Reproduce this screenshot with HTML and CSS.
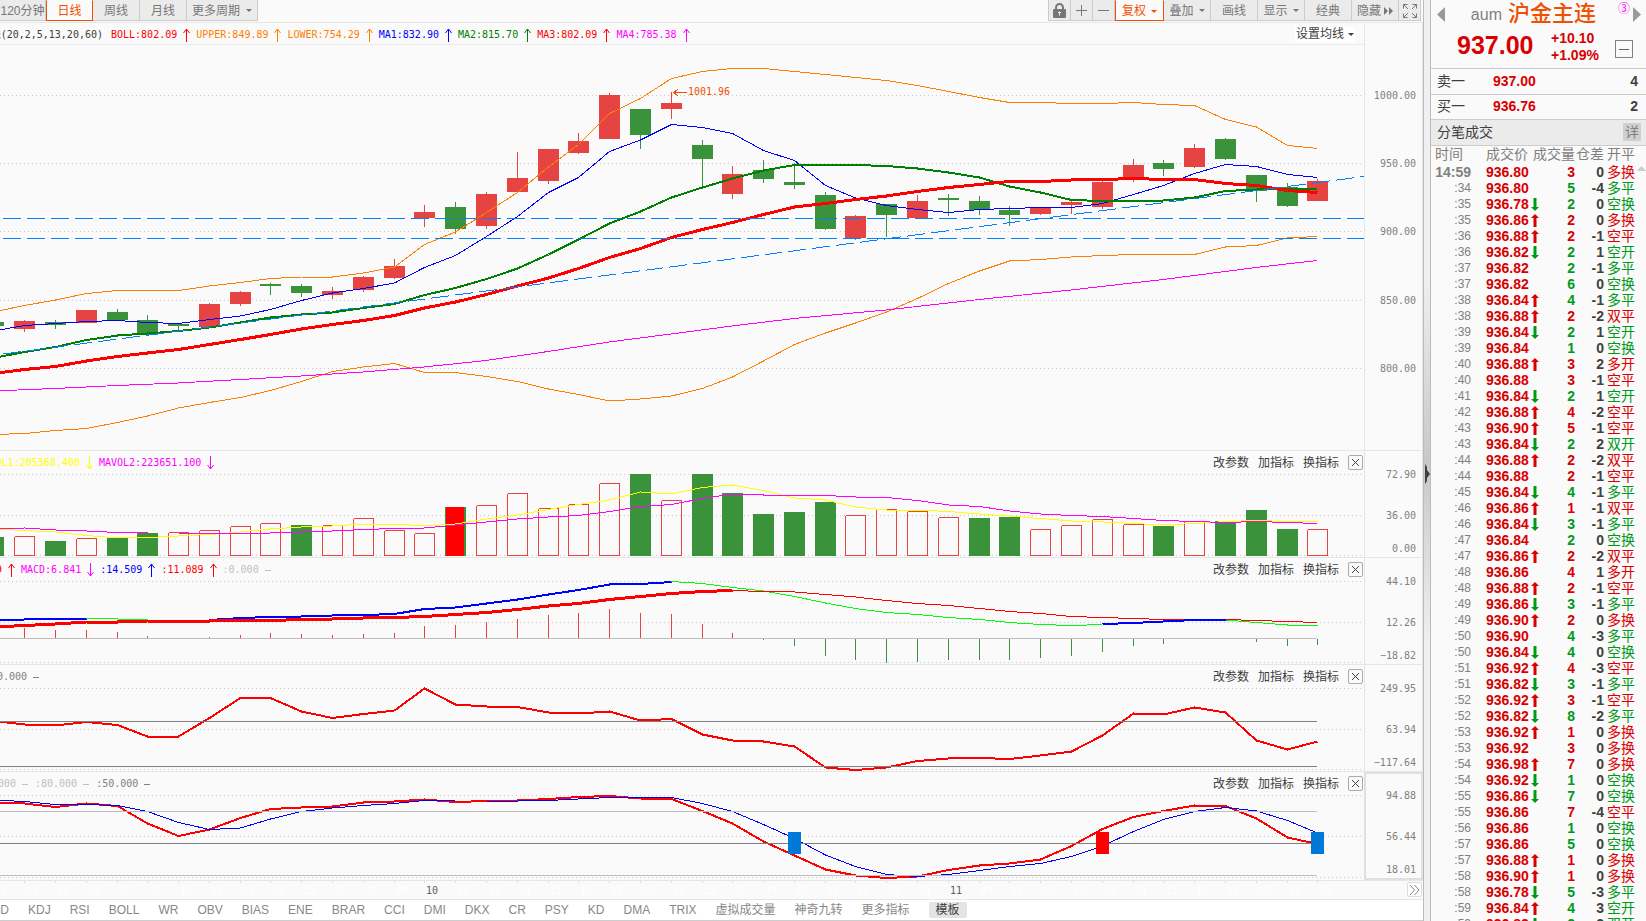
FILE: index.html
```html
<!DOCTYPE html>
<html lang="zh-CN">
<head>
<meta charset="utf-8">
<title>沪金主连 937.00</title>
<link rel="stylesheet" href="styles.css">
</head>
<body>
<svg class="defs" aria-hidden="true">
  <symbol id="up" viewBox="0 0 9 14"><path d="M4.500 14V1M1.500 5L4.500 1L7.500 5" fill="none" stroke="currentColor"/></symbol>
  <symbol id="down" viewBox="0 0 9 14"><path d="M4.500 0V13M1.500 9L4.500 13L7.500 9" fill="none" stroke="currentColor"/></symbol>
  <symbol id="flat" viewBox="0 0 9 14"><path d="M1 7.500H7" fill="none" stroke="currentColor"/></symbol>
  <symbol id="cross" viewBox="0 0 13 13"><path d="M3 3L10 10M10 3L3 10" fill="none" stroke="currentColor"/></symbol>
  <symbol id="tick-up" viewBox="0 0 8 13"><path d="M4 0L8 4H5.500V13H2.500V4H0Z" fill="currentColor"/></symbol>
  <symbol id="tick-down" viewBox="0 0 8 13"><path d="M4 13L0 9H2.500V0H5.500V9H8Z" fill="currentColor"/></symbol>
</svg>
<div class="app">
  <main class="chart">
    <header class="toolbar">
      <nav class="group">
        <button class="tool period-cut">120分钟</button>
        <button class="tool period active">日线</button>
        <button class="tool period">周线</button>
        <button class="tool period">月线</button>
        <button class="tool period-more">更多周期<i class="caret"></i></button>
      </nav>
      <div class="group right">
        <button class="tool icon" aria-label="锁定"><svg width="13" height="15" viewBox="0 0 13 15"><path d="M3 7V4.500a3.500 3.500 0 0 1 7 0V7" fill="none" stroke="#777" stroke-width="2"/><rect y="6" width="13" height="9" rx="1" fill="#777"/><path d="M6.500 8.500v4M5 9.500h3" stroke="#eee" fill="none"/></svg></button>
        <button class="tool icon" aria-label="放大"><svg width="11" height="11" viewBox="0 0 11 11"><path d="M5.500 0V11M0 5.500H11" stroke="#777" fill="none"/></svg></button>
        <button class="tool icon" aria-label="缩小"><svg width="11" height="11" viewBox="0 0 11 11"><path d="M0 5.500H11" stroke="#777" fill="none"/></svg></button>
        <button class="tool wide active">复权<i class="caret"></i></button>
        <button class="tool wide">叠加<i class="caret"></i></button>
        <button class="tool wide">画线</button>
        <button class="tool wide">显示<i class="caret"></i></button>
        <button class="tool wide">经典</button>
        <button class="tool wide hide">隐藏<svg width="9" height="8" viewBox="0 0 9 8"><path d="M0 0L4 4L0 8ZM5 0L9 4L5 8Z" fill="#777"/></svg></button>
        <button class="tool icon" aria-label="全屏"><svg width="14" height="14" viewBox="0 0 14 14"><path d="M.5 4.500V.5H4.500M.5 .5L5 5M9.500 .5H13.500V4.500M13.500 .5L9 5M.5 9.500V13.500H4.500M.5 13.500L5 9M13.500 9.500V13.500H9.500M13.500 13.500L9 9" stroke="#777" fill="none"/></svg></button>
      </div>
    </header>

    <section class="row legend-row">
      <div class="plot">
        <div class="legend first">
          <span class="lead title">均线(20,2,5,13,20,60)</span>
          <span class="item red">BOLL:802.09<svg><use href="#up"/></svg></span>
          <span class="item orange">UPPER:849.89<svg><use href="#up"/></svg></span>
          <span class="item orange">LOWER:754.29<svg><use href="#up"/></svg></span>
          <span class="item blue">MA1:832.90<svg><use href="#up"/></svg></span>
          <span class="item green">MA2:815.70<svg><use href="#up"/></svg></span>
          <span class="item red">MA3:802.09<svg><use href="#up"/></svg></span>
          <span class="item magenta">MA4:785.38<svg><use href="#up"/></svg></span>
        </div>
        <button class="ma-set">设置均线<i class="caret"></i></button>
      </div>
      <div class="axis"></div>
    </section>

    <section class="row">
      <div class="plot"><svg class="canvas" data-panel="price"></svg></div>
      <div class="axis price-axis"><span>1000.00</span><span>950.00</span><span>900.00</span><span>850.00</span><span>800.00</span></div>
    </section>

    <section class="row">
      <div class="plot"><svg class="canvas" data-panel="volume"></svg>
        <div class="head">
          <div class="legend"><span class="lead vol yellow">MAVOL1:205368.400</span><span class="item yellow"><svg><use href="#down"/></svg></span><span class="item magenta">MAVOL2:223651.100<svg><use href="#down"/></svg></span></div>
          <div class="actions"><button>改参数</button><button>加指标</button><button>换指标</button><button class="close" aria-label="关闭"><svg><use href="#cross"/></svg></button></div>
        </div>
      </div>
      <div class="axis sub-axis"><span>72.90</span><span>36.00</span><span>0.00</span></div>
    </section>

    <section class="row">
      <div class="plot"><svg class="canvas" data-panel="macd"></svg>
        <div class="head">
          <div class="legend"><span class="lead macd red">9</span><span class="item red"><svg><use href="#up"/></svg></span><span class="item magenta">MACD:6.841<svg><use href="#down"/></svg></span><span class="item blue">:14.509<svg><use href="#up"/></svg></span><span class="item red">:11.089<svg><use href="#up"/></svg></span><span class="item silver">:0.000<svg><use href="#flat"/></svg></span></div>
          <div class="actions"><button>改参数</button><button>加指标</button><button>换指标</button><button class="close" aria-label="关闭"><svg><use href="#cross"/></svg></button></div>
        </div>
      </div>
      <div class="axis sub-axis"><span>44.10</span><span>12.26</span><span>−18.82</span></div>
    </section>

    <section class="row">
      <div class="plot"><svg class="canvas" data-panel="cci"></svg>
        <div class="head">
          <div class="legend"><span class="lead cci gray">0.000</span><span class="item gray"><svg><use href="#flat"/></svg></span></div>
          <div class="actions"><button>改参数</button><button>加指标</button><button>换指标</button><button class="close" aria-label="关闭"><svg><use href="#cross"/></svg></button></div>
        </div>
      </div>
      <div class="axis sub-axis"><span>249.95</span><span>63.94</span><span>−117.64</span></div>
    </section>

    <section class="row">
      <div class="plot"><svg class="canvas" data-panel="kd"></svg>
        <div class="head">
          <div class="legend"><span class="lead kd silver">20.000</span><span class="item silver"><svg><use href="#flat"/></svg></span><span class="item silver">:80.000<svg><use href="#flat"/></svg></span><span class="item gray">:50.000<svg><use href="#flat"/></svg></span></div>
          <div class="actions"><button>改参数</button><button>加指标</button><button>换指标</button><button class="close" aria-label="关闭"><svg><use href="#cross"/></svg></button></div>
        </div>
      </div>
      <div class="axis sub-axis selected"><span>94.88</span><span>56.44</span><span>18.01</span></div>
    </section>

    <section class="row dates">
      <div class="plot"><svg class="canvas" data-panel="dates"></svg></div>
      <div class="date-end"><button class="next" aria-label="更多"><svg width="11" height="10" viewBox="0 0 11 10"><path d="M1 0L5.500 5L1 10M5.500 0L10 5L5.500 10" fill="none" stroke="#888"/></svg></button></div>
    </section>

    <nav class="tabs">
      <span class="tab-lead"><button>MACD</button></span>
      <button>KDJ</button><button>RSI</button><button>BOLL</button><button>WR</button><button>OBV</button><button>BIAS</button><button>ENE</button><button>BRAR</button><button>CCI</button><button>DMI</button><button>DKX</button><button>CR</button><button>PSY</button><button>KD</button><button>DMA</button><button>TRIX</button><button>虚拟成交量</button><button>神奇九转</button><button>更多指标</button><button class="chosen">模板</button>
    </nav>
  </main>

  <div class="splitter"><svg width="5" height="20" viewBox="0 0 5 20"><path d="M0 0L2 3V6L5 10L2 14V17L0 20Z" fill="#404040"/></svg></div>

  <aside class="quote">
    <div class="name">
      <svg width="8" height="15" viewBox="0 0 8 15"><path d="M8 0V15L0 7.500Z" fill="#999"/></svg>
      <h1><small>aum</small><a href="#">沪金主连</a></h1>
      <span class="badge">③</span>
      <svg width="8" height="15" viewBox="0 0 8 15"><path d="M0 0V15L8 7.500Z" fill="#999"/></svg>
    </div>
    <div class="price">
      <strong>937.00</strong>
      <div class="change"><span>+10.10</span><span>+1.09%</span></div>
      <button class="minus" aria-label="收起"></button>
    </div>
    <div class="level"><span>卖一</span><b>937.00</b><em>4</em></div>
    <div class="level last"><span>买一</span><b>936.76</b><em>2</em></div>
    <div class="ticks-title"><span>分笔成交</span><button>详</button></div>
    <div class="ticks">
      <table>
        <colgroup><col class="c1"><col class="c2"><col class="c3"><col class="c4"><col></colgroup>
        <thead><tr><th>时间</th><th>成交价</th><th>成交量</th><th>仓差</th><th>开平</th></tr></thead>
        <tbody id="ticks"></tbody>
      </table>
      <svg class="scroll" width="9" height="5" viewBox="0 0 9 5"><path d="M0 5L4.500 0L9 5Z" fill="#ccc"/></svg>
    </div>
  </aside>
</div>
<script src="chart.js"></script>
</body>
</html>
```
FILE: styles.css
```css
* { box-sizing: border-box; }
html, body { height: 100%; }
body {
  margin: 0;
  background: #fafafa;
  color: #404040;
  font: 12px/16px "Liberation Sans", "Noto Sans CJK SC", sans-serif;
  overflow: hidden;
}
button {
  margin: 0;
  padding: 0;
  border: 0;
  background: none;
  color: inherit;
  font: inherit;
  white-space: nowrap;
}
svg { display: block; flex: none; }
.defs { position: absolute; width: 0; height: 0; }

.app { display: grid; grid-template-columns: minmax(0, 1fr) 8px 215px; height: 100vh; }
.chart {
  display: grid;
  grid-template-rows: 23px 22px 406fr 107fr 107fr 107fr 109fr 19px 21px;
  min-width: 0;
}

.toolbar { display: flex; justify-content: space-between; border-bottom: 1px solid #e6e6e6; padding-right: 2px; }
.group { display: flex; height: 21px; }
.tool {
  display: flex;
  align-items: center;
  justify-content: center;
  gap: 5px;
  height: 21px;
  padding-top: 1px;
  background: #ebebeb;
  color: #777;
  border-right: 1px solid #ccc;
  border-bottom: 1px solid #ccc;
}
.tool.active { background: #fafafa; border: 1px solid #f05000; border-top-color: #fafafa; color: #f05000; }
.group.right { border-left: 1px solid #ccc; }
.period-cut { width: 46px; }
.period { width: 47px; }
.period-more { width: 71px; }
.icon { width: 22px; }
.wide { width: 47px; }
.wide.active { width: 49px; }
.hide { gap: 3px; }
.caret { border: 3px solid transparent; border-top-color: currentColor; border-bottom: 0; }
.period-more .caret { margin-left: 1px; }

.row { display: grid; grid-template-columns: minmax(0, 1fr) 59px; min-height: 0; border-bottom: 1px solid #e6e6e6; }
.plot { position: relative; min-width: 0; overflow: hidden; }
.canvas { position: absolute; inset: 0; width: 100%; height: 100%; }
.axis {
  display: grid;
  border-left: 1px solid #e6e6e6;
  border-right: 1px solid #e6e6e6;
  padding-right: 6px;
  text-align: right;
  color: #808080;
}
.axis, .legend, .canvas text { font-family: "DejaVu Sans Mono", "Noto Sans CJK SC", monospace; font-size: 10px; }
.price-axis { grid-template-rows: 68fr 68fr 69fr 68fr 90fr; padding-top: 42px; }
.sub-axis { grid-template-rows: 41fr 33fr 17fr; padding-top: 15px; }
.axis span { line-height: 17px; }
.selected { border: 2px solid #e0e0e0; padding-right: 5px; padding-top: 13px; }

.legend-row { border-bottom: 0; }
.legend-row .plot { display: flex; justify-content: space-between; align-items: center; padding: 2px 9px 0 0; border-bottom: 1px solid #ebebeb; }
.legend { display: flex; align-items: center; height: 15px; white-space: nowrap; }
.item { display: flex; align-items: center; }
.item svg { width: 9px; height: 14px; margin: 0 5px; }
.lead { display: flex; justify-content: flex-end; overflow: hidden; }
.title { width: 103px; margin-right: 8px; }
.vol { width: 80px; }
.macd { width: 2px; }
.cci { width: 27px; }
.kd { width: 16px; }
.ma-set { display: flex; align-items: center; gap: 4px; padding: 0 1px; background: #fff; height: 15px; line-height: 15px; }
.head { position: relative; display: flex; justify-content: space-between; padding: 4px 1px 0 0; }
.actions { display: flex; gap: 9px; line-height: 16px; }
.close { width: 15px; height: 15px; border: 1px solid #aaa; border-radius: 2px; }
.close svg { width: 13px; height: 13px; }

.red { color: #f00; }
.orange { color: #ff8000; }
.blue { color: #00f; }
.green { color: #008000; }
.magenta { color: #f0f; }
.yellow { color: #ff0; }
.silver { color: #c0c0c0; }
.gray { color: #808080; }

.date-end { display: flex; justify-content: flex-end; padding: 1px 1px 0 0; }
.next { display: flex; align-items: center; justify-content: center; width: 15px; height: 15px; border: 1px solid #ddd; border-radius: 2px; background: #fff; }
.tabs { display: flex; align-items: center; gap: 19px; background: #fff; border-bottom: 1px solid #ccc; color: #888; overflow: hidden; }
.tab-lead { display: flex; justify-content: flex-end; width: 9px; flex: none; overflow: hidden; }
.chosen { background: #e4e4e4; color: #404040; padding: 0 7px; border-radius: 2px; }

.splitter {
  display: flex;
  align-items: center;
  padding: 26px 0 0 1px;
  border-left: 1px solid #bbb;
  border-right: 1px solid #bbb;
  background: linear-gradient(#f0f0f0, #f0f0f0 30%, #c8c8c8 50%, #f0f0f0 70%, #f0f0f0);
}

.quote { display: flex; flex-direction: column; min-height: 0; overflow: hidden; }
.name { display: flex; align-items: flex-start; padding: 7px 5px 0 6px; height: 28px; }
.name h1 { display: flex; flex: 1; align-items: center; justify-content: flex-end; gap: 6px; margin: 0; height: 14px; font-weight: 500; font-size: 22px; }
.name small { font-size: 16px; font-weight: 400; color: #808080; padding-top: 2px; }
.name a { color: #f05000; text-decoration: none; }
.badge { color: #f0f; width: 12px; margin: -4px 3px 0 22px; font-size: 12px; line-height: 12px; }
.price { display: flex; align-items: center; height: 40px; padding: 0 13px 6px 26px; color: #d90000; }
.price strong { font-size: 25px; width: 94px; }
.change { display: grid; flex: 1; padding-top: 3px; font-weight: 700; font-size: 14px; line-height: 17px; }
.minus { width: 18px; height: 18px; border: 1px solid #808080; display: grid; place-items: center; margin-top: 8px; }
.minus::before { content: ""; width: 10px; height: 1px; background: #606060; }
.level { display: grid; grid-template-columns: 56px 1fr auto; align-items: center; height: 26px; padding: 0 8px 2px 6px; border-top: 1px solid #ccc; font-size: 14px; }
.level.last { height: 25px; }
.level b { color: #d90000; }
.level em { font-style: normal; font-weight: 700; }
.ticks-title { display: flex; align-items: center; justify-content: space-between; height: 27px; padding: 0 5px 2px 6px; background: #ebebeb; border: solid #ccc; border-width: 1px 0; font-size: 14px; }
.ticks-title button { width: 18px; height: 18px; background: #d0d0d0; color: #808080; line-height: 18px; }
.ticks { position: relative; flex: 1; min-height: 0; overflow: hidden; }
.ticks table { width: 100%; table-layout: fixed; border-collapse: collapse; font-size: 14px; }
.ticks th, .ticks td { padding: 0; height: 16px; line-height: 16px; white-space: nowrap; text-align: right; vertical-align: middle; font-weight: 700; }
.ticks thead th { height: 18px; font-weight: 400; color: #808080; padding-bottom: 2px; }
.ticks th:first-child { text-align: left; padding-left: 4px; }
.ticks th:nth-child(2), .ticks td:nth-child(2) { text-align: left; padding-left: 15px; }
.ticks th:nth-child(5), .ticks td:nth-child(5) { text-align: left; padding-left: 3px; font-weight: 400; }
.c1 { width: 40px; }
.c2 { width: 62px; }
.c3 { width: 42px; }
.c4 { width: 29px; }
.ticks td.time { font-size: 12px; font-weight: 400; color: #808080; }
.ticks tr:first-child td.time { font-size: 14px; font-weight: 700; }
.trade { display: flex; align-items: center; gap: 2px; }
.trade svg { width: 8px; height: 13px; }
.up { color: #d90000; }
.dn { color: #009918; }
.scroll { position: absolute; right: 0; top: 20px; }
```
FILE: chart.js
```js
const W = 1364;
const FIRST = -1;
const RED = '#e64343', GREEN = '#3a923a';
const barX = i => Math.floor(24.65 + 30.79 * i);

// [rise, body top, body bottom, wick top, wick bottom], first bar is index -1
const candles = [
[0,322,326,322,326],[1,321,329,320,332],[0,322,325,320,329],[1,310,323,310,323],[0,312,320,309,320],[0,320,335,315,335],[0,324,326,323,331],[1,304,327,303,327],[1,292,304,291,306],[0,284,286,283,295],[0,286,293,284,297],[1,291,295,287,299],[1,277,290,276,292],[1,266,278,259,279],[1,212,218,205,227],[0,207,229,202,234],[1,194,226,192,229],[1,178,192,152,192],[1,149,181,149,184],[1,141,153,133,154],[1,95,139,93,139],[0,109,135,109,149],[1,103,109,92,119],[0,145,159,140,187],[1,174,194,166,199],[0,170,179,160,183],[0,182,185,163,189],[0,195,229,192,230],[1,216,238,215,240],[0,204,215,204,237],[1,201,218,195,218],[0,198,200,194,216],[0,201,210,196,215],[0,210,215,206,226],[1,208,214,208,215],[1,202,205,200,214],[1,182,207,180,209],[1,165,179,159,182],[0,163,169,160,176],[1,148,167,144,168],[0,139,159,138,160],[0,175,191,175,202],[0,187,206,183,207],[1,181,201,179,201]];
const upper = [312,305.5,300,293.5,290.5,290.5,290.5,286,282.5,278.5,277,277,273,267,244.5,232,212.5,192.5,167,144.5,113.5,98.5,78.5,71.5,68.5,68.5,71.5,74.5,77.5,80.5,85.5,91.5,97.5,102.5,102.5,103.5,103.5,102.5,104.5,105.5,119.5,127,145.5,148.5];
const lower = [434.5,433.5,430.5,428.5,422.5,416,408,402.5,397.5,390.5,381.5,371.5,367,363.5,372.5,372.5,376.5,381.5,389,394.5,401,399,396,388.5,377,361,344.5,333,323,312,298.5,283.5,271,261,259.5,257,255.5,254.5,254.5,254.5,247,245.5,238,236.5];
const ma1 = [331,325.5,323.5,321.5,320.5,322.5,323.5,319.5,316,309.5,300.5,293,288.5,283,267.5,255.5,236.5,216.5,192.5,177.5,151.5,140,124.5,127.5,133.5,150.5,160.5,185.5,198,205.5,209.5,212.5,209.5,208.5,207.5,207.5,203.5,194.5,185.5,173.5,164.5,166.5,174.5,177.5];
const ma2 = [358,352,347,340,335.5,333.5,331,327.5,322.5,317.5,314.5,312.5,308,304,295,288,279,268.5,254.5,239.5,223.5,211.5,197.5,187.5,178.5,170.5,165,165,165,166,168.5,172.5,177.5,186.5,192.5,200,201,201,200.5,197.5,191,189.5,189,188.5];
const ma3 = [373.5,369.5,366.5,361,356.5,353,349.5,344.5,339.5,334.5,329,324.5,320.5,315.5,308,302,294.5,286,278,268.5,257.5,248.5,237.5,229.5,222.5,214.5,207,203.5,199.5,196,191.5,187.5,184.5,181.5,181.5,180,179.5,178.5,179.5,179.5,183.5,185.5,190.5,192.5];
const ma4 = [[-1,391],[1,388.5],[3,385.5],[5,383],[7,379.5],[9,376],[11,372],[13,367],[15,360.5],[17,351.5],[19,342],[21,334],[23,326],[25,318.5],[28,310],[31,299.5],[34,290],[37,279.5],[40,267.5],[42,260.5]];

// volume bars: [kind, top]; kind g = solid, h = outlined, r = highlighted
const volume = 'g537 h536 g541 h538 g537 g533 h532 h530 h526 h523 g525 h525 h518 h530 h533 r507 h505 h493 h508 h504 h483 g474 h500 g474 g493 g514 g512 g502 h515 h509 h511 h517 g518 g517 h529 h525 h519 h524 g526 h521 g521 g510 g529 h529'.split(' ');
const vol1 = [529,530.5,532,535.5,538,537.5,536,534.5,532,529,527,526,524,524,526,524,519,515,509.5,504.5,500,492,494,487.5,485,490.5,498,500,507,510,510,511.5,514,516,518.5,521,522,523.5,525,523.5,521.5,520.5,521.5,522];
const vol2 = [529,528,530,531,532.5,533,533,533,533,533,532,531,529.5,528.5,528,525,522,519,517,515.5,511.5,506.5,504.5,498.5,494,495,495,495.5,497,497.5,500.5,505,506.5,511,514,515.5,516.5,518.5,520.5,521.5,522.5,521.5,522.5,523.5];

const hist = [0,628,630,630,632,636,0,637,635,633,634,635,634,633,626,625,622,619,615,613,609,613,614,624,633,640,646,656,660,663,662,660,660,660,658,656,652,646,644,0,0,642,646,645];
const macdLines = [
['#00f',2,-1,[620,619.5,619,619]],
['#0f0',1,2,[618.5,619,620]],
['#00f',2,6,[620,618,617,616.5,615.5,615,614,609,607.5,603.5,599.5,594.5,590,584.5,584,582]],
['#0f0',1,21,[581.5,583.5,587.5,591,596.5,603,608.5,612.5,614.5,617.5,619.5,622.5,624.5,625.5,624.5]],
['#0f0',1,39,[620,622.5,625,625]],
['#f00',3,-1,[627,625.5,624,622,622,621,621,621,620.5,620.5,619.5,619,618,617.5,616.5,614.5,612.5,609.5,606,603.5,599.5,596.5,593.5,591.5,590.5]],
['#f00',1,23,[590.5,591.5,592,594.5,597,600.5,603.5,605.5,608.5,611.5,613.5,616.5,617.5,618.5,619.5,619.5,619.5,620.5,621.5,622.5]],
['#00f',2,35,[624,623,621.5,620,620]]];
const cci = [721,724.5,725.5,722,725,736.5,736.5,718,698,698,711.5,718,714,710.5,688.5,704.5,706.5,707,712.5,713.5,711.5,720.5,719,734.5,740.5,741.5,746.5,767.5,770,767.5,761,758.5,758,759,755.5,751.5,735.5,713.5,714.5,707.5,712.5,740.5,749.5,741.5];
const kLine = [803,803.5,807,803.5,806,823.5,836,829.5,818,809,807.5,806.5,802.5,801.5,799.5,802,801,800.5,799,797,796,798.5,799,811,823.5,841.5,855.5,869.5,875.5,878,876.5,870,865.5,863.5,859.5,846,829,817,811,805.5,806,818.5,837.5,844];
const dLine = [800,801.5,804.5,804.5,805.5,811.5,822.5,829.5,828,819,811.5,808,805.5,803.5,800.5,801,801,801,800.5,799,797.5,797.5,797.5,803.5,811.5,824.5,838.5,855,866.5,874.5,876.5,874.5,870.5,866.5,863.5,856.5,846,831.5,819.5,811.5,807.5,811,820.5,833];
const days = '11 12 15 16 17 18 19 22 23 24 25 26 29 30 10 10 13 14 15 16 17 20 21 22 23 24 27 28 29 30 31 11 04 05 06 07 10 11 12 13 14 17 18 19'.split(' ');

const box = {
  price: [45, 405, [95, 163, 231, 300, 368]],
  volume: [451, 106, [474, 515, 555]],
  macd: [558, 106, [581, 622, 662]],
  cci: [665, 106, [688, 729, 769]],
  kd: [772, 108, [795, 836, 877]],
  dates: [881, 18, []]
};

function draw(svg) {
  const [top, height, grid] = box[svg.dataset.panel];
  const sx = svg.clientWidth / W, sy = svg.clientHeight / height;
  const X = v => +(v * sx).toFixed(2);
  const Y = v => +((v - top) * sy).toFixed(2);
  let out = '';
  const rect = (x, y, w, h, fill) => { out += `<rect x="${X(x)}" y="${Y(y)}" width="${X(w)}" height="${+(h * sy).toFixed(2)}" fill="${fill}"/>`; };
  const line = (pts, color, width = 1, dash = '') => {
    out += `<polyline fill="none" stroke="${color}" stroke-width="${width}" stroke-dasharray="${dash}" points="${pts.map(([x, y]) => X(x) + ',' + Y(y)).join(' ')}"/>`;
  };
  const series = (ys, color, width = 1, start = FIRST) => line(ys.map((y, k) => [barX(k + start) + 0.5, y]), color, width);
  const level = (y, color) => line([[0, y + 0.5], [1317, y + 0.5]], color);
  grid.forEach(y => line([[0, y + 0.5], [W, y + 0.5]], '#ccc', 1, '1 3'));

  const painters = {
    price() {
      candles.forEach(([rise, a, b, c, d], k) => {
        const x = barX(k + FIRST), color = rise ? RED : GREEN;
        rect(x, c, 1, d - c, color);
        rect(x - 10, a, 21, b - a, color);
      });
      series(upper, '#ff8000');
      series(lower, '#ff8000');
      series(ma1, '#00f');
      series(ma2, '#008000', 2);
      series(ma3, '#f00', 3);
      line(ma4.map(([i, y]) => [barX(i), y]), '#f0f');
      line([[3, 218.5], [W, 218.5]], '#007fff', 1, '18 6');
      line([[3, 238.5], [W, 238.5]], '#007fff', 1, '18 6');
      line([[3, 354], [W, 176.5]], '#007fff', 1, '18 6');
      line([[687, 92.5], [673, 92.5]], '#f05000');
      line([[678, 89], [673.5, 92.5], [678, 96]], '#f05000');
      out += `<text x="${X(688)}" y="${Y(95)}" fill="#f05000">1001.96</text>`;
    },
    volume() {
      volume.forEach((v, k) => {
        const x = barX(k + FIRST) - 10, y = +v.slice(1), kind = v[0];
        if (kind === 'h') line([[x + .5, y + .5], [x + 20.5, y + .5], [x + 20.5, 555.5], [x + .5, 555.5], [x + .5, y + .5]], RED);
        else rect(x, y, 21, 556 - y, GREEN);
        if (kind === 'r') rect(x + 1, y, 18, 556 - y, '#f00');
      });
      series(vol1, '#ff0');
      series(vol2, '#f0f');
    },
    macd() {
      level(638, '#bfbfbf');
      hist.forEach((y, k) => {
        if (!y) return;
        const x = barX(k + FIRST);
        if (y < 638) rect(x, y, 1, 638 - y, RED); else rect(x, 639, 1, y - 639, GREEN);
      });
      macdLines.forEach(([color, width, start, ys]) => series(ys, color, width, start));
    },
    cci() {
      series(cci, '#f00', 2);
      level(721, '#808080');
      level(766, '#808080');
    },
    kd() {
      series(kLine, '#f00', 2);
      series(dLine, '#00f');
      level(811, '#bfbfbf');
      level(843, '#808080');
      level(875, '#bfbfbf');
      [[25, '#0078d7'], [35, '#f00'], [42, '#0078d7']].forEach(([i, c]) => rect(barX(i) - 6, 832, 13, 22, c));
    },
    dates() {
      days.forEach((d, k) => {
        const i = k + FIRST, x = barX(i), month = i === 13 || i === 30;
        rect(x, 881, 1, 2, '#ddd');
        out += `<text x="${X(x + 2)}" y="${Y(894)}" fill="${month ? '#606060' : '#fff'}">${d}</text>`;
      });
    }
  };
  painters[svg.dataset.panel]();
  svg.setAttribute('shape-rendering', 'crispEdges');
  svg.innerHTML = out;
}
const drawAll = () => document.querySelectorAll('.canvas').forEach(draw);
drawAll();
addEventListener('resize', drawAll);

// time, price, direction, volume, open-interest change, kind, colour
const ticks = `14:59 80 - 3 0 多换 r|:34 80 - 5 -4 多平 g|:35 78 d 2 0 空换 g|:35 86 u 2 0 多换 r|:36 88 u 2 -1 空平 r|:36 82 d 2 1 空开 g|:37 82 - 2 -1 多平 g|:37 82 - 6 0 空换 g|:38 84 u 4 -1 多平 g|:38 88 u 2 -2 双平 r|:39 84 d 2 1 空开 g|:39 84 - 1 0 空换 g|:40 88 u 3 2 多开 r|:40 88 - 3 -1 空平 r|:41 84 d 2 1 空开 g|:42 88 u 4 -2 空平 r|:43 90 u 5 -1 空平 r|:43 84 d 2 2 双开 g|:44 88 u 2 -2 双平 r|:44 88 - 2 -1 空平 r|:45 84 d 4 -1 多平 g|:46 86 u 1 -1 双平 r|:46 84 d 3 -1 多平 g|:47 84 - 2 0 空换 g|:47 86 u 2 -2 双平 r|:48 86 - 4 1 多开 r|:48 88 u 2 -1 空平 r|:49 86 d 3 -1 多平 g|:49 90 u 2 0 多换 r|:50 90 - 4 -3 多平 g|:50 84 d 4 0 空换 g|:51 92 u 4 -3 空平 r|:51 82 d 3 -1 多平 g|:52 92 u 3 -1 空平 r|:52 82 d 8 -2 多平 g|:53 92 u 1 0 多换 r|:53 92 - 3 0 多换 r|:54 98 u 7 0 多换 r|:54 92 d 1 0 空换 g|:55 86 d 7 0 空换 g|:55 86 - 7 -4 空平 r|:56 86 - 1 0 空换 g|:57 86 - 5 0 空换 g|:57 88 u 1 0 多换 r|:58 90 u 1 0 多换 r|:58 78 d 5 -3 多平 g|:59 84 u 4 3 空开 g|:59 82 d 2 2 双开 g`;
const mark = {
  u: '<svg class="up"><use href="#tick-up"/></svg>',
  d: '<svg class="dn"><use href="#tick-down"/></svg>',
  '-': ''
};
document.getElementById('ticks').innerHTML = ticks.split('|').map(row => {
  const [time, cents, dir, vol, diff, kind, c] = row.split(' ');
  const cls = c === 'r' ? 'up' : 'dn';
  return `<tr><td class="time">${time}</td><td class="up"><div class="trade">936.${cents}${mark[dir]}</div></td><td class="${cls}">${vol}</td><td>${diff}</td><td class="${cls}">${kind}</td></tr>`;
}).join('');
```
